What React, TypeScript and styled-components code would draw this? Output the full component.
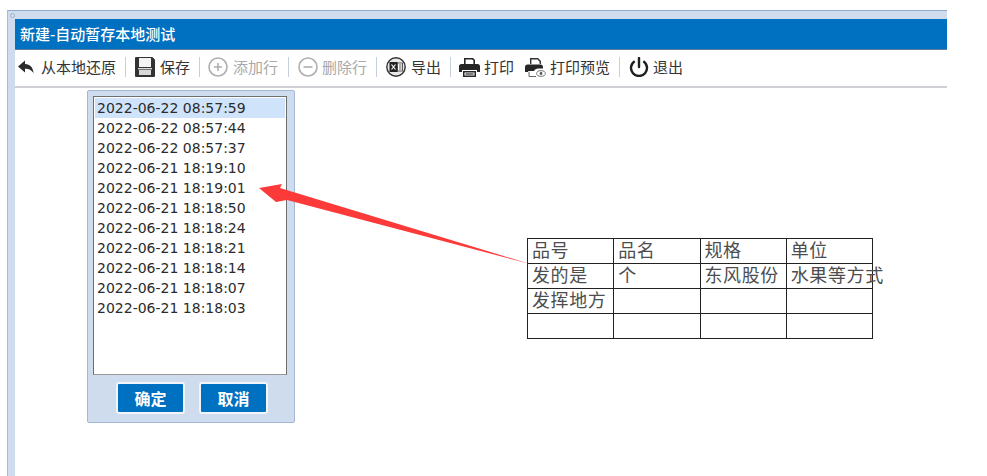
import React from "react";
import styled, { createGlobalStyle } from "styled-components";

const Global = createGlobalStyle`
  html, body { margin: 0; padding: 0; background: #fff; height: 476px; overflow: hidden; }
  * { box-sizing: border-box; }
`;

const CJK = `"Noto Sans CJK SC", "Liberation Sans", sans-serif`;

const Page = styled.div`
  position: relative;
  width: 987px;
  height: 476px;
  padding: 10px 40px 0 7px;
  overflow: hidden;
  font-family: ${CJK};
`;
const Frame = styled.div`
  display: flex;
  flex-direction: column;
  height: 466px;
`;
const FrameTop = styled.div`
  position: relative;
  height: 9px;
  background: #cfdcee;
  border-top: 1px solid #93a9cc;
  border-left: 1px solid #a9bcd9;
  flex: none;
`;
const FrameDot = styled.span`
  position: absolute;
  left: 2px;
  top: 2px;
  width: 5px;
  height: 5px;
  border-radius: 50%;
  border: 1px solid #9fb0c8;
`;
const FrameBody = styled.div`
  display: flex;
  flex: 1;
  min-height: 0;
`;
const FrameSide = styled.div`
  width: 8px;
  flex: none;
  background: #cfdcee;
  border-left: 1px solid #a9bcd9;
`;
const Main = styled.div`
  flex: 1;
  min-width: 0;
  display: flex;
  flex-direction: column;
  background: #fff;
`;
const TitleBar = styled.div`
  height: 31px;
  flex: none;
  background: #0070c0;
  border-bottom: 1px solid #5f7f9c;
  color: #fff;
  font-size: 15px;
  font-weight: 500;
  line-height: 30px;
  padding-left: 5px;
`;
const Toolbar = styled.div`
  height: 38px;
  flex: none;
  display: flex;
  align-items: center;
  border-bottom: 2px solid #cfcfd4;
  padding: 0 0 2px 3px;
`;
const Tool = styled.div<{ $gap: number; $off?: boolean; $ml?: number }>`
  display: flex;
  align-items: center;
  gap: ${(p) => p.$gap}px;
  margin-left: ${(p) => p.$ml ?? 0}px;
  font-size: 15px;
  line-height: 20px;
  white-space: nowrap;
  color: ${(p) => (p.$off ? "#a9a9a9" : "#333")};
`;
const Sep = styled.span<{ $ml: number; $mr: number }>`
  width: 1px;
  height: 20px;
  background: #c5d0dc;
  margin: 0 ${(p) => p.$mr}px 0 ${(p) => p.$ml}px;
  flex: none;
`;
const Content = styled.div`
  flex: 1;
  display: flex;
  align-items: flex-start;
  min-height: 0;
`;
const Dialog = styled.div`
  width: 208px;
  height: 333px;
  margin: 2px 0 0 72px;
  flex: none;
  background: #cfdcee;
  border: 1px solid #a4b8d6;
  border-radius: 2px;
  padding: 5px 7px 5px 5px;
  display: flex;
  flex-direction: column;
`;
const ListBox = styled.div`
  height: 279px;
  flex: none;
  background: #fff;
  border: 1px solid #6e6e6e;
  border-bottom-color: #999;
  padding: 1px;
  font-family: "DejaVu Sans", sans-serif;
  font-size: 14px;
  color: #2b2b2b;
`;
const ListRow = styled.div<{ $active?: boolean }>`
  height: 20px;
  line-height: 20px;
  padding-left: 2px;
  white-space: nowrap;
  background: ${(p) => (p.$active ? "#cfe4fb" : "transparent")};
`;
const DialogActions = styled.div`
  display: flex;
  gap: 14px;
  padding: 7px 0 0 23px;
`;
const ActionButton = styled.button`
  width: 69px;
  height: 32px;
  flex: none;
  background: #0070c0;
  border: 2px solid #f1f4f9;
  border-radius: 3px;
  color: #fff;
  font-family: ${CJK};
  font-size: 16px;
  font-weight: 700;
  line-height: 26px;
  padding: 0;
`;
const SheetTable = styled.table`
  width: 346px;
  margin: 150px 0 0 232px;
  flex: none;
  table-layout: fixed;
  border-collapse: collapse;
  font-family: "Liberation Serif", ${CJK};
  font-size: 18px;
  letter-spacing: 0.6px;
  color: #4d4d4d;
`;
const Cell = styled.td`
  height: 25px;
  padding: 0 0 0 4px;
  border: 1.5px solid #222;
  line-height: 22px;
  white-space: nowrap;
  overflow: visible;
`;
const Arrow = styled.svg`
  position: absolute;
  left: 0;
  top: 0;
  width: 987px;
  height: 476px;
  pointer-events: none;
`;

const times = [
  "2022-06-22 08:57:59",
  "2022-06-22 08:57:44",
  "2022-06-22 08:57:37",
  "2022-06-21 18:19:10",
  "2022-06-21 18:19:01",
  "2022-06-21 18:18:50",
  "2022-06-21 18:18:24",
  "2022-06-21 18:18:21",
  "2022-06-21 18:18:14",
  "2022-06-21 18:18:07",
  "2022-06-21 18:18:03",
];

const rows = [
  ["品号", "品名", "规格", "单位"],
  ["发的是", "个", "东风股份", "水果等方式"],
  ["发挥地方", "", "", ""],
  ["", "", "", ""],
];

const BackIcon = () => (
  <svg width="16" height="16" viewBox="0 0 16 16">
    <path d="M0 7.500 7 1.500v3.600c5 .2 8.200 3.400 8.600 9.400-1.600-3.100-4-4.600-8.600-4.700v3.700z" fill="#2b2b2b" />
  </svg>
);
const SaveIcon = () => (
  <svg width="20" height="20" viewBox="0 0 20 20">
    <path d="M.5.5h17l2 2v17H.5z" fill="#f2f2f2" stroke="#333" />
    <path d="M1 1h3v9h12V1h2.500l.5 1.500V19H1z" fill="#333" />
    <rect x="4" y="13" width="12" height="5" fill="#d8d8d8" />
    <rect x="3" y="11" width="14" height="1.400" fill="#d8d8d8" />
  </svg>
);
const CircleGlyph = ({ minus }: { minus?: boolean }) => (
  <svg width="20" height="20" viewBox="0 0 20 20" fill="none" stroke="#aeaeae" strokeWidth="1.600">
    <circle cx="10" cy="10" r="9" />
    <path d={minus ? "M5.500 10h9" : "M6 10h8M10 6v8"} />
  </svg>
);
const ExcelIcon = () => (
  <svg width="20" height="20" viewBox="0 0 20 20">
    <circle cx="10" cy="10" r="9.200" fill="#e9e9e9" stroke="#333" strokeWidth="1.400" />
    <rect x="3.500" y="5" width="8" height="10" fill="#222" />
    <rect x="11.500" y="6" width="5" height="8" fill="#fff" stroke="#333" strokeWidth=".8" />
    <path d="M13 8h2.500M13 10h2.500M13 12h2.500" stroke="#333" strokeWidth=".8" />
    <path d="M5.500 7.500 9.500 12.500M9.500 7.500 5.500 12.500" stroke="#fff" strokeWidth="1.200" />
  </svg>
);
const PrintIcon = () => (
  <svg width="21" height="20" viewBox="0 0 21 20">
    <path d="M5 7V1h9l2 2v4h-1.600V3.600L13 2.600H6.600V7z" fill="#262626" />
    <path d="M2.500 7h16A2.500 2.500 0 0 1 21 9.500V15h-3v-2H3v2H0V9.500A2.500 2.500 0 0 1 2.500 7z" fill="#262626" />
    <path d="M4 14h13v6H4zM5.500 15.500v3h10v-3z" fill="#262626" />
    <rect x="6.500" y="16.400" width="8" height="1.200" fill="#262626" />
  </svg>
);
const PreviewIcon = () => (
  <svg width="21" height="20" viewBox="0 0 21 20">
    <path d="M5 7V1h8l3 3v3h-1.400V4.800L12.500 2.400H6.400V7z" fill="#333" />
    <path d="M2.500 7.500h13c1.500 0 2.500 1 2.500 2.500v1.500h-5c-2 .2-3.200.8-4 2.500H3v1H0V10c0-1.500 1-2.500 2.500-2.500z" fill="#262626" />
    <path d="M4 14.500v5h7" fill="none" stroke="#666" strokeWidth="1" />
    <ellipse cx="16" cy="16.500" rx="4.300" ry="2.800" fill="#fff" stroke="#666" strokeWidth=".9" />
    <circle cx="16" cy="16.500" r="1.400" fill="#555" />
  </svg>
);
const PowerIcon = () => (
  <svg width="20" height="20" viewBox="0 0 20 20" fill="none" stroke="#1f1f1f" strokeWidth="2.400">
    <path d="M5.700 4.200a8 8 0 1 0 8.600 0" />
    <path d="M10 1v9" strokeLinecap="round" />
  </svg>
);

export default function App() {
  return (
    <Page>
      <Global />
      <Frame>
        <FrameTop>
          <FrameDot />
        </FrameTop>
        <FrameBody>
          <FrameSide />
          <Main>
            <TitleBar>新建-自动暂存本地测试</TitleBar>
            <Toolbar>
              <Tool $gap={7}><BackIcon />从本地还原</Tool>
              <Sep $ml={9} $mr={9} />
              <Tool $gap={5}><SaveIcon />保存</Tool>
              <Sep $ml={9} $mr={8} />
              <Tool $gap={5} $off><CircleGlyph />添加行</Tool>
              <Sep $ml={10} $mr={9} />
              <Tool $gap={4} $off><CircleGlyph minus />删除行</Tool>
              <Sep $ml={9} $mr={9} />
              <Tool $gap={5}><ExcelIcon />导出</Tool>
              <Sep $ml={9} $mr={8} />
              <Tool $gap={4}><PrintIcon />打印</Tool>
              <Tool $gap={4} $ml={11}><PreviewIcon />打印预览</Tool>
              <Sep $ml={9} $mr={9} />
              <Tool $gap={4}><PowerIcon />退出</Tool>
            </Toolbar>
            <Content>
              <Dialog>
                <ListBox>
                  {times.map((t, i) => (
                    <ListRow key={t} $active={i === 0}>{t}</ListRow>
                  ))}
                </ListBox>
                <DialogActions>
                  <ActionButton>确定</ActionButton>
                  <ActionButton>取消</ActionButton>
                </DialogActions>
              </Dialog>
              <SheetTable>
                <tbody>
                  {rows.map((r, i) => (
                    <tr key={i}>
                      {r.map((c, j) => (
                        <Cell key={j}>{c}</Cell>
                      ))}
                    </tr>
                  ))}
                </tbody>
              </SheetTable>
            </Content>
          </Main>
        </FrameBody>
      </Frame>
      <Arrow viewBox="0 0 987 476">
        <polygon points="259,188 282,184 280,188 530,264 287,200 276,202" fill="#fd3a3a" />
      </Arrow>
    </Page>
  );
}
